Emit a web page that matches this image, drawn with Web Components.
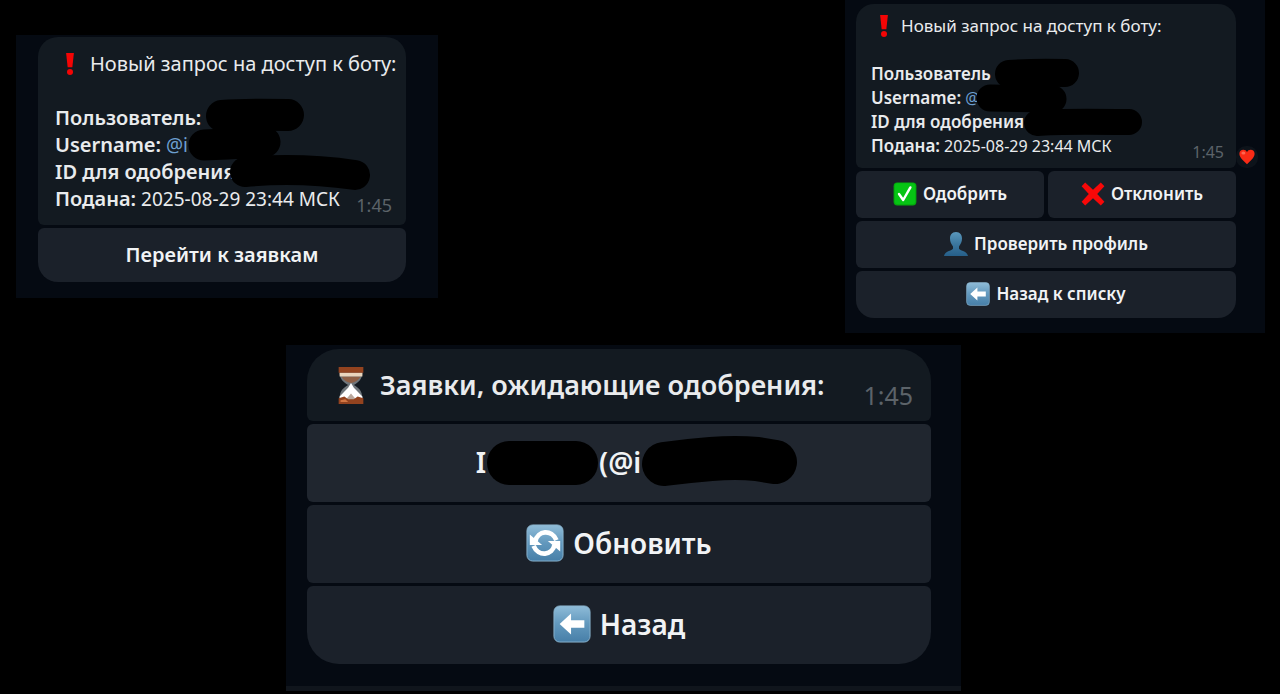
<!DOCTYPE html>
<html lang="ru">
<head>
<meta charset="utf-8">
<title>Заявки на доступ к боту</title>
<style>
  html { background: #000; }
  body { margin: 0; background: #000; font-family: "Noto Sans", "Open Sans", sans-serif; color: #e9ebed; }
</style>
</head>
<body>
<request-board></request-board>

<template id="board">
  <style>
    :host {
      display: grid;
      grid-template-columns: 16fr 270fr 152fr 407fr 116fr 304fr 15fr;
      row-gap: 12px;
      align-items: start;
    }
    .notice { grid-area: 1 / 2 / 2 / 4; margin-top: 35px;
      --pad: 2px 32px 16px 22px; --title: 20px; --size: 19px; --label: 20px; --action: 20px; --line: 27px; --time: 18px; --drop: 7px;
      --inset: 13px 14px 13px 17px; --button: 54px; --lift: 2px; --round: 20px; --icon: 24px; --lead: 30px; --space: 5px; }
    .review { grid-area: 1 / 5 / 2 / 7;
      --pad: 4px 29px 15px 11px; --title: 17px; --size: 16px; --label: 17px; --action: 17px; --line: 24px; --time: 16px; --drop: 6px;
      --inset: 10px 12px 10px 15px; --button: 47px; --lift: 2px; --round: 18px; --icon: 24px; --lead: 26px; --space: 4px; }
    .queue { grid-area: 2 / 3 / 3 / 6; border-bottom: 5px solid #10151c;
      --pad: 4px 30px 22px 21px; --title: 27px; --size: 27px; --label: 27px; --action: 28px; --line: 40px; --time: 25px; --drop: 10px;
      --inset: 16px 18px 16px 24px; --button: 78px; --lift: 2px; --round: 32px; --icon: 38px; --gap: 9px; --lead: 40px; --space: 9px; }
    a { color: #6d9fd0; text-decoration: none; }
    b { font-size: var(--label); font-weight: 600; }
    .title { font-size: var(--title); }
  </style>

  <chat-panel class="notice">
    <chat-bubble>
      <chat-line class="title"><emoji-icon name="alert" lead></emoji-icon>Новый запрос на доступ к боту:</chat-line>
      <chat-line></chat-line>
      <chat-line><b>Пользователь:</b></chat-line>
      <chat-line><b>Username:</b> <a href="#user">@i</a></chat-line>
      <chat-line><b>ID для одобрения</b></chat-line>
      <chat-line><b>Подана:</b> 2025-08-29 23:44 МСК<time slot="time">1:45</time></chat-line>
      <ink-marks slot="ink" shape="notice"></ink-marks>
    </chat-bubble>
    <chat-button last>Перейти к заявкам</chat-button>
  </chat-panel>

  <chat-panel class="review">
    <chat-bubble>
      <chat-line class="title"><emoji-icon name="alert" lead></emoji-icon>Новый запрос на доступ к боту:</chat-line>
      <chat-line></chat-line>
      <chat-line><b>Пользователь</b></chat-line>
      <chat-line><b>Username:</b> <a href="#user">@</a></chat-line>
      <chat-line><b>ID для одобрения</b></chat-line>
      <chat-line><b>Подана:</b> 2025-08-29 23:44 МСК<time slot="time">1:45</time></chat-line>
      <ink-marks slot="ink" shape="review"></ink-marks>
      <chat-reaction slot="ink"></chat-reaction>
    </chat-bubble>
    <button-row>
      <chat-button><emoji-icon name="check"></emoji-icon>Одобрить</chat-button>
      <chat-button><emoji-icon name="cross"></emoji-icon>Отклонить</chat-button>
    </button-row>
    <chat-button><emoji-icon name="person"></emoji-icon>Проверить профиль</chat-button>
    <chat-button last><emoji-icon name="back"></emoji-icon>Назад к списку</chat-button>
  </chat-panel>

  <chat-panel class="queue">
    <chat-bubble>
      <chat-line class="title"><emoji-icon name="hourglass" lead></emoji-icon><b>Заявки, ожидающие одобрения:</b><time slot="time">1:45</time></chat-line>
    </chat-bubble>
    <chat-button active>I<ink-marks shape="name"></ink-marks>(@i<ink-marks shape="handle"></ink-marks></chat-button>
    <chat-button><emoji-icon name="refresh"></emoji-icon>Обновить</chat-button>
    <chat-button last><emoji-icon name="back"></emoji-icon>Назад</chat-button>
  </chat-panel>
</template>

<script>
const define = (name, html, setup) => customElements.define(name, class extends HTMLElement {
  constructor() {
    super();
    this.attachShadow({ mode: "open" }).innerHTML = html;
  }
  connectedCallback() { if (setup) setup(this, this.shadowRoot); }
});

const icons = {
  alert: `<path fill="#f40505" d="M13.5 1.5h13l-2.6 24h-7.8z"/><circle cx="20" cy="33.5" r="5" fill="#f40505"/>`,
  check: `<rect x="1" y="1" width="38" height="38" rx="6" fill="#04ad0d"/><rect x="3" y="2" width="34" height="35" rx="5" fill="#06c414"/><path d="M10 20l7 10L29 9" fill="none" stroke="#fff" stroke-width="4" stroke-linecap="round" stroke-linejoin="round"/>`,
  cross: `<path d="M7 1l13 12L33 1l6 6-12 13 12 13-6 6-13-12L7 39l-6-6 12-13L1 7z" fill="#f80808"/>`,
  person: `<defs><linearGradient id="p" x2="0" y2="1"><stop stop-color="#5a98bd"/><stop offset=".5" stop-color="#3c779f"/><stop offset="1" stop-color="#265f89"/></linearGradient></defs><path fill="url(#p)" d="M20 0c7 0 10 5 10 11 0 5-2 9-5 13v4c3 4 13 3 15 12H0c2-9 12-8 15-12v-4c-3-4-5-8-5-13C10 5 13 0 20 0z"/>`,
  tile: `<defs><linearGradient id="t" x2="0" y2="1"><stop stop-color="#8fbcd8"/><stop offset=".5" stop-color="#6298bd"/><stop offset="1" stop-color="#477fa8"/></linearGradient></defs><rect x="1" y="1" width="38" height="38" rx="6" fill="url(#t)" stroke="#8bb5cf" stroke-width="1"/>`,
  heart: `<path fill="#f92b16" d="M20 38C12 30 1 22 1 12 1 6 5 2 11 2c4 0 7 2 9 6 2-4 5-6 9-6 6 0 10 4 10 10 0 10-11 18-19 26z"/><ellipse cx="11" cy="10" rx="5" ry="4" fill="#ff6651"/>`,
  hourglass: `<path d="M8 6h24c0 8-4 11-9 14 5 3 9 6 9 14H8c0-8 4-11 9-14-5-3-9-6-9-14z" fill="#6f767b"/><path d="M10 11h20c-2 4-6 6-10 7-4-1-8-3-10-7z" fill="#8f6046"/><path d="M8 7h24v4H8z" fill="#ead5bd"/><path d="M20 18l3 5 9 9v5H8v-5l9-9z" fill="#fff"/><path d="M14 36l6-7 6 7z" fill="#b9a79c"/><path d="M7 1h26v6H7zM7 40v-6l6-2 4 3h6l4-3 6 2v6z" fill="#93431f"/><path d="M9 36l5-1 3 3H9z" fill="#d27643"/>`
};
icons.back = icons.tile + `<path d="M7 20L19 9v7h14v8H19v7z" fill="#fff"/>`;
icons.refresh = icons.tile + `<g fill="none" stroke="#fff" stroke-width="5"><path d="M10 18C12 7 27 5 32 17"/><path d="M30 22C28 33 13 35 8 23"/></g><path fill="#fff" d="M4 11v11h13zM36 29V18H23z"/>`;

define("emoji-icon", `<style>
  :host { display: inline-flex; flex: none; width: var(--icon); height: var(--icon); margin-right: var(--gap, 6px); }
  :host([lead]) { width: var(--lead); margin-right: var(--space); justify-content: center; }
  svg { display: block; width: 100%; height: 100%; }
</style><svg viewBox="0 0 40 40" aria-hidden="true"></svg>`, (host, root) => {
  root.querySelector("svg").innerHTML = icons[host.getAttribute("name")];
});

define("chat-panel", `<style>
  :host { display: flex; flex-direction: column; gap: 3px; padding: var(--pad); background: #050a12; min-width: 0; }
</style><slot></slot>`);

define("chat-bubble", `<style>
  :host { display: block; position: relative; padding: var(--inset); background: #131a21;
    border-radius: var(--round) var(--round) 6px 6px; font-size: var(--size); }
</style><slot></slot><slot name="ink"></slot>`);

define("chat-line", `<style>
  :host { display: flex; align-items: center; height: var(--line); line-height: var(--line); white-space: nowrap; }
  :host(.title) .text { display: flex; align-items: center; }
  ::slotted(time) { font-size: var(--time); color: #5c6369; }
  .time { margin: var(--drop) 0 calc(0px - var(--drop)) auto; }
</style><span class="text"><slot></slot></span><span class="time"><slot name="time"></slot></span>`);

define("button-row", `<style>
  :host { display: grid; grid-template-columns: 1fr 1fr; gap: 4px; }
</style><slot></slot>`);

define("chat-button", `<style>
  :host { display: block; min-width: 0; }
  button { display: flex; align-items: center; justify-content: center; width: 100%; height: var(--button);
    margin: 0; padding: 0 0 var(--lift, 0px); border: 0; border-radius: 6px; background: #1b212a; color: #f1f3f5;
    font: 600 var(--action)/var(--line) "Noto Sans", "Open Sans", sans-serif; white-space: nowrap; cursor: pointer; }
  :host([active]) button { background: #20262f; }
  :host([last]) button { border-radius: 6px 6px var(--round) var(--round); }
</style><button type="button"><slot></slot></button>`);

define("chat-reaction", `<style>
  :host { position: absolute; left: 100%; bottom: 0; display: flex; align-items: center; justify-content: center;
    width: 22px; height: 22px; border-radius: 10px; background: #0d131a; }
  svg { width: 16px; height: 16px; }
</style><svg viewBox="0 0 40 40" role="img" aria-label="Сердце">${icons.heart}</svg>`);

const marks = {
  notice: { box: [368, 188], over: true, paths: [[32, "M184 79Q205 77 250 78"], [31, "M166 108Q190 107 227 105"], [30, "M207 135Q260 130 317 138"]] },
  review: { box: [380, 164], over: true, paths: [[28, "M153 70Q180 68 209 69"], [27, "M134 94L197 95"], [26, "M181 119Q200 117 273 118"]] },
  name: { box: [113, 44], paths: [[44, "M23 23H90"]] },
  handle: { box: [121, 50], paths: [[44, "M23 27Q45 24 70 22T116 22L134 25"]] }
};
define("ink-marks", `<style>
  :host { display: block; flex: none; }
  svg { display: block; overflow: visible; }
  path { fill: none; stroke: #000; stroke-linecap: round; stroke-linejoin: round; }
</style><svg aria-hidden="true"></svg>`, (host, root) => {
  const mark = marks[host.getAttribute("shape")];
  const svg = root.querySelector("svg");
  svg.setAttribute("width", mark.box[0]);
  svg.setAttribute("height", mark.box[1]);
  svg.innerHTML = mark.paths.map(([w, d]) => `<path stroke-width="${w}" d="${d}"/>`).join("");
  if (mark.over) Object.assign(host.style, { position: "absolute", left: 0, top: 0, pointerEvents: "none" });
});

customElements.define("request-board", class extends HTMLElement {
  constructor() {
    super();
    this.attachShadow({ mode: "open" }).append(document.getElementById("board").content.cloneNode(true));
  }
});
</script>
</body>
</html>
